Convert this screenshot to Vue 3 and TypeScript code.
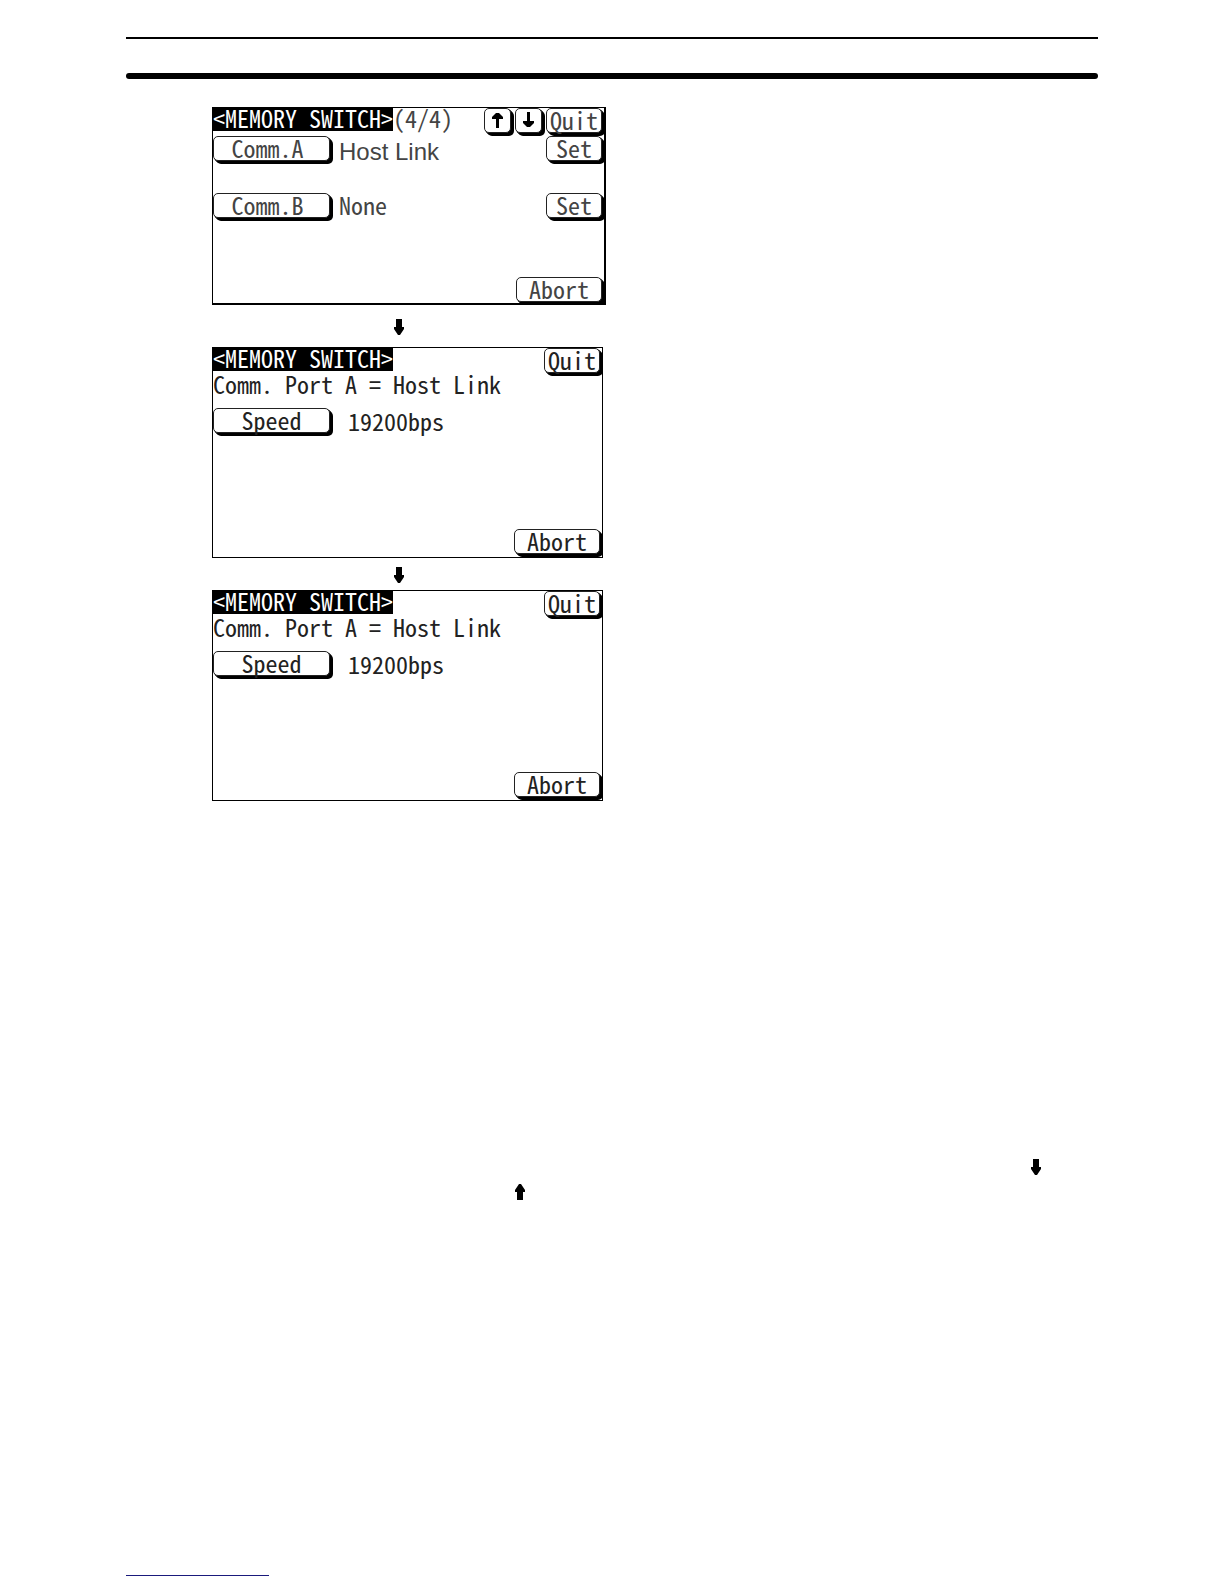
<script setup lang="ts">
interface SpeedScreen {
  id: string
  port: string
  speed: string
}

const ports = [
  { name: 'Comm.A', value: 'Host Link', plain: true },
  { name: 'Comm.B', value: 'None', plain: false },
]

const speedScreens: SpeedScreen[] = [
  { id: 'speed-first', port: 'Comm. Port A = Host Link', speed: '19200bps' },
  { id: 'speed-second', port: 'Comm. Port A = Host Link', speed: '19200bps' },
]

const arrowDown = 'M2 0H8V8H10V10L6 16H4L0 10V8H2Z'
const arrowUp = 'M2 16H8V8H10V6L6 0H4L0 6V8H2Z'
</script>

<template>
  <main class="page">
    <header class="rules">
      <hr class="rule thin" />
      <hr class="rule thick" />
    </header>

    <div class="figures">
      <section class="screen overview">
        <div class="bar">
          <h2 class="title">&lt;MEMORY SWITCH&gt;</h2>
          <span class="count">(4/4)</span>
          <div class="tools">
            <button class="key icon" type="button" aria-label="Previous page">
              <svg width="11" height="16" viewBox="0 0 11 16"><path d="M4 16H7V7H11V5L7 1H4L0 5V7H4Z" /></svg>
            </button>
            <button class="key icon" type="button" aria-label="Next page">
              <svg width="11" height="16" viewBox="0 0 11 16"><path d="M4 0H7V9H11V11L7 15H4L0 11V9H4Z" /></svg>
            </button>
            <button class="key small" type="button">Quit</button>
          </div>
        </div>
        <div v-for="port in ports" :key="port.name" class="port">
          <button class="key wide" type="button">{{ port.name }}</button>
          <span class="value" :class="{ plain: port.plain }">{{ port.value }}</span>
          <button class="key small" type="button">Set</button>
        </div>
        <button class="key abort" type="button">Abort</button>
      </section>

      <template v-for="screen in speedScreens" :key="screen.id">
        <div class="step">
          <svg width="10" height="16" viewBox="0 0 10 16" aria-hidden="true"><path :d="arrowDown" /></svg>
        </div>
        <section class="screen detail">
          <div class="bar">
            <h2 class="title">&lt;MEMORY SWITCH&gt;</h2>
            <button class="key small" type="button">Quit</button>
          </div>
          <p class="heading">{{ screen.port }}</p>
          <div class="setting">
            <button class="key wide" type="button">Speed</button>
            <span class="value">{{ screen.speed }}</span>
          </div>
          <button class="key abort" type="button">Abort</button>
        </section>
      </template>
    </div>

    <div class="notes">
      <svg class="note-down" width="10" height="16" viewBox="0 0 10 16" aria-hidden="true"><path :d="arrowDown" /></svg>
      <svg class="note-up" width="10" height="16" viewBox="0 0 10 16" aria-hidden="true"><path :d="arrowUp" /></svg>
    </div>

    <a class="footer-link" href="#" aria-label="Website"></a>
  </main>
</template>

<style>
body {
  margin: 0;
  background: #fff;
}
</style>

<style scoped>
.page {
  box-sizing: border-box;
  display: flex;
  flex-direction: column;
  min-height: 100vh;
  padding: 37px 126px 8px;
  color: #222;
  font-family: "Noto Sans Mono CJK JP", "Noto Sans Mono CJK SC", "Liberation Mono", monospace;
  font-size: 24px;
  font-weight: 300;
  line-height: 24px;
}

.rules {
  display: flex;
  flex-direction: column;
  gap: 34px;
}

.rule {
  width: 100%;
  margin: 0;
  border: 0;
  background: #000;
}

.thin {
  height: 2px;
}

.thick {
  height: 6px;
  border-radius: 3px;
}

.figures {
  display: flex;
  flex-direction: column;
  align-items: flex-start;
  padding: 28px 0 0 86px;
}

.screen {
  box-sizing: border-box;
  display: flex;
  flex-direction: column;
  width: 100%;
  border: 1px solid #000;
  white-space: nowrap;
}

.overview {
  max-width: 394px;
  min-height: 198px;
  border-right-width: 2px;
  border-bottom-width: 2px;
  color: #444;
}

.detail {
  max-width: 391px;
  min-height: 211px;
}

.bar {
  display: flex;
  align-items: flex-start;
  height: 28px;
}

.detail .bar {
  height: 26px;
}

.title {
  margin: 0;
  padding-bottom: 3px;
  background: #000;
  color: #fff;
  font-size: 24px;
  font-weight: 300;
  line-height: 20px;
}

.count {
  line-height: 20px;
}

.tools {
  display: flex;
  gap: 4px;
  margin-left: auto;
}

.key {
  box-sizing: border-box;
  display: flex;
  flex: none;
  align-items: center;
  justify-content: center;
  height: 25px;
  margin: 0;
  padding: 0 0 2px;
  border: 1px solid #222;
  border-radius: 5px;
  background: #fff;
  box-shadow: 1px 1px #000, 2px 2px #000, 3px 3px #000;
  color: inherit;
  font: inherit;
  line-height: 20px;
}

.icon {
  width: 27px;
  color: #000;
}

.wide {
  width: 117px;
}

.port .wide {
  padding-right: 8px;
}

.small {
  width: 56px;
  margin-right: 2px;
}

.bar > .small {
  margin-left: auto;
}

.abort {
  align-self: flex-end;
  width: 86px;
  margin: auto 2px 3px 0;
}

.overview .abort {
  margin-bottom: 1px;
}

.port {
  display: flex;
  align-items: flex-start;
  height: 57px;
}

.value {
  flex: 1;
  padding-left: 9px;
}

.plain {
  font-family: "Liberation Sans", sans-serif;
  font-weight: 400;
  line-height: 32px;
}

.step {
  display: flex;
  align-items: center;
  height: 32px;
  padding: 6px 0 4px 182px;
}

.step ~ .step {
  height: 22px;
}

.heading {
  margin: 0;
  line-height: 20px;
}

.setting {
  display: flex;
  align-items: center;
  padding-top: 14px;
}

.setting .value {
  padding-left: 18px;
}

.notes {
  display: flex;
  flex-direction: column;
  gap: 9px;
  padding: 358px 57px 0 389px;
}

.note-down {
  align-self: flex-end;
}

.footer-link {
  width: 143px;
  height: 20px;
  margin-top: auto;
  border-bottom: 1px solid #1a1a7c;
}
</style>
